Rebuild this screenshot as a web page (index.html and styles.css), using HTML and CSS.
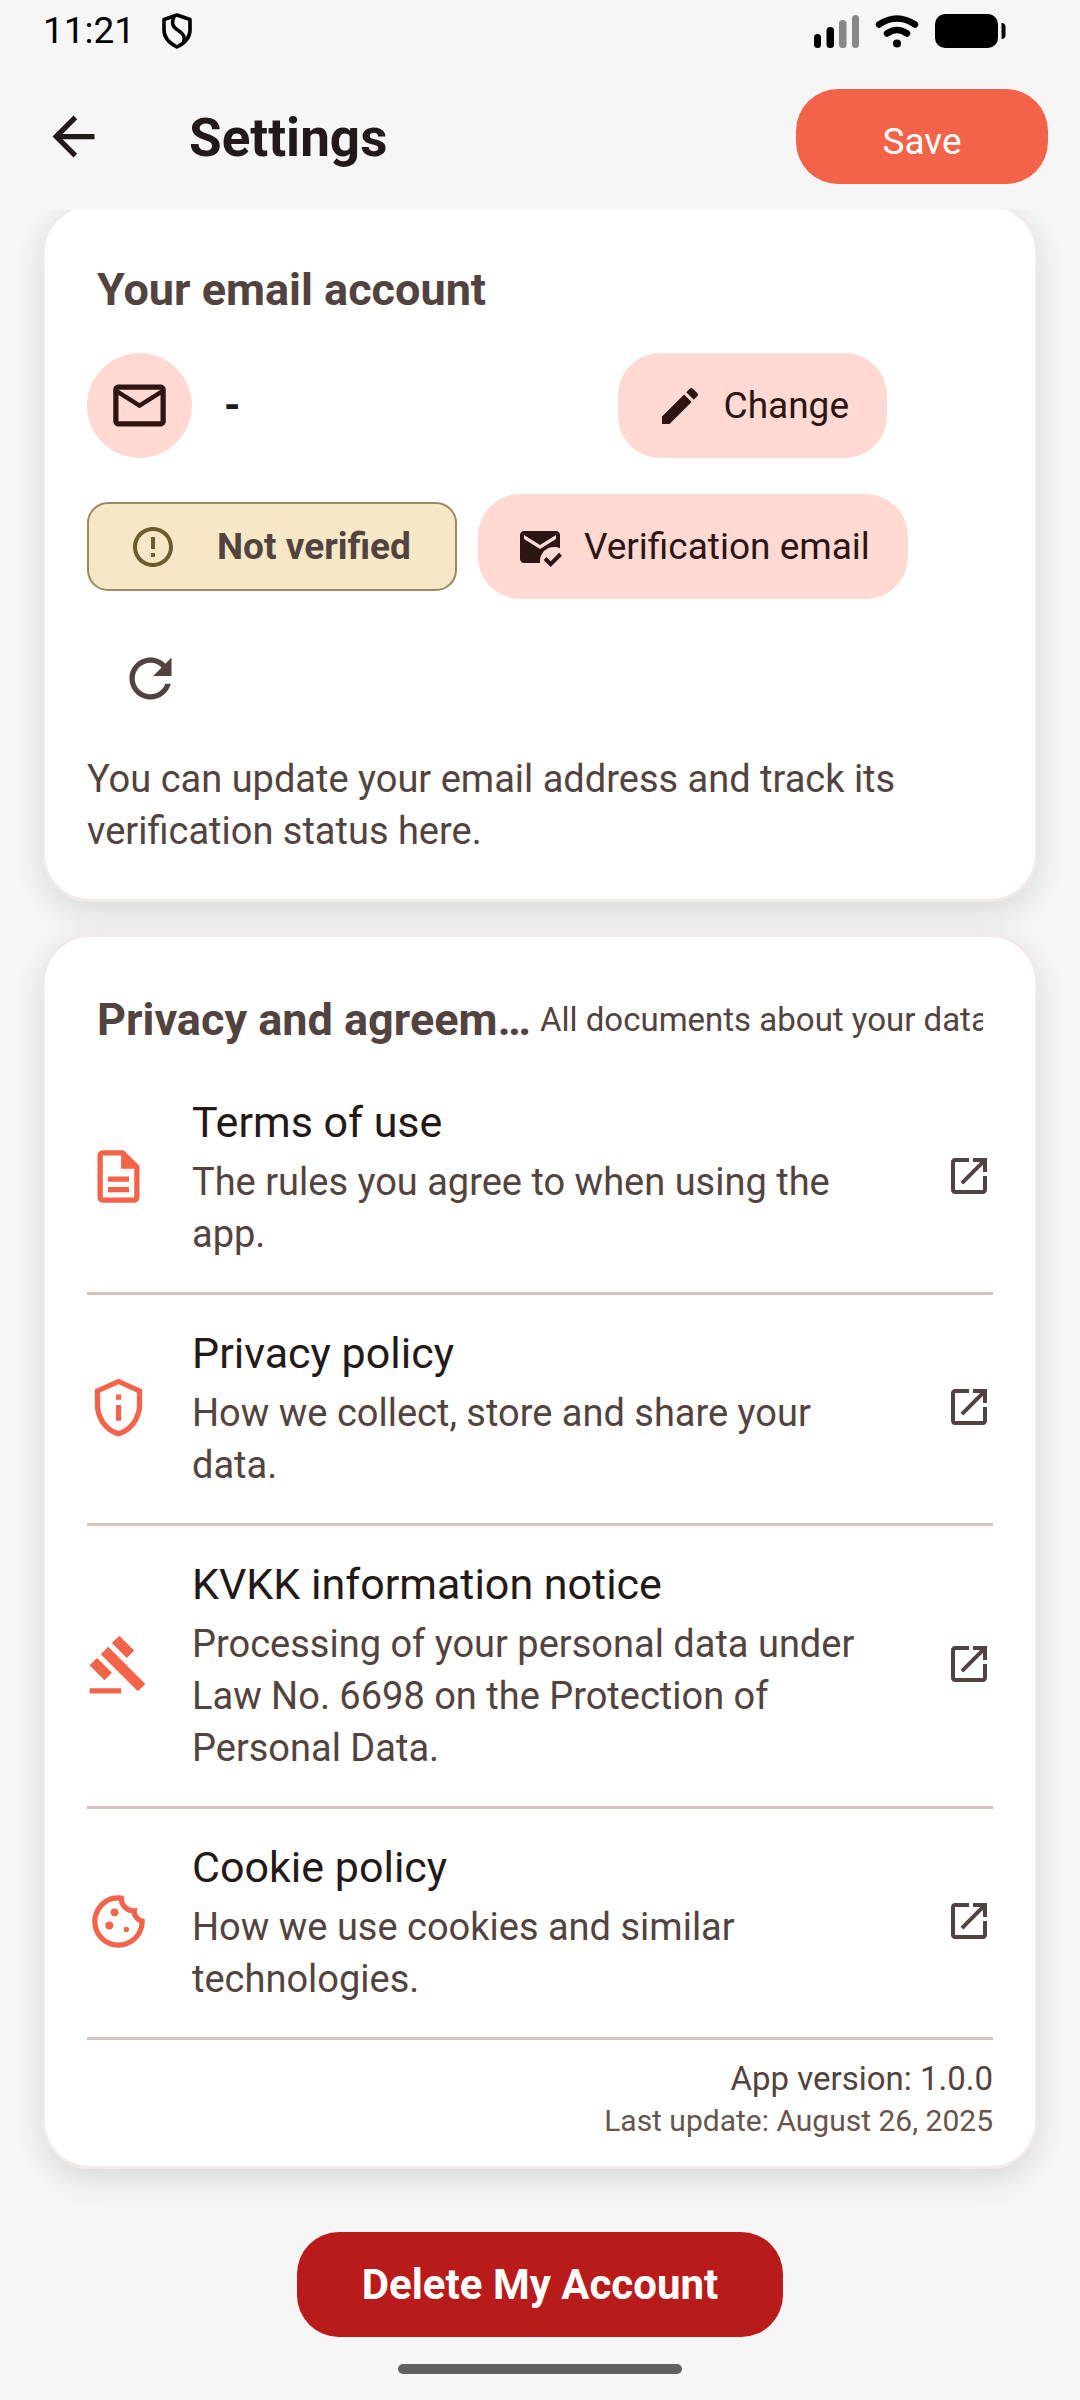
FILE: index.html
```html
<!DOCTYPE html>
<html lang="en">
<head>
  <meta charset="utf-8">
  <meta name="viewport" content="width=device-width, initial-scale=1">
  <title>Settings</title>
  <link rel="stylesheet" href="styles.css">
</head>
<body>
  <div class="top">
    <div class="status">
      <span class="clock">11:21</span>
      <svg class="shield" viewBox="0 0 30 36" fill="none" stroke="#000" stroke-width="3.600" stroke-linejoin="round"><path d="M15 2 28 6.500V17c0 8-6 13.500-13 17C8 30.500 2 25 2 17V6.500Z"/><path d="M12 3.500C8.500 12.500 12 14.500 17 18c5 3.500 6 6 4.500 11"/></svg>
      <div class="status-icons">
        <svg class="signal" viewBox="0 0 45 34"><rect x="0" y="20" width="7" height="14" rx="3.500"/><rect x="12.500" y="13" width="7.500" height="21" rx="3.500"/><rect x="25" y="6" width="7.500" height="28" rx="3.500" fill="#888"/><rect x="38" y="1" width="7" height="33" rx="3.500" fill="#888"/></svg>
        <svg class="wifi" viewBox="0 0 44 34" fill="none" stroke="#000" stroke-width="6.500" stroke-linecap="round"><path d="M4 10.500Q22-1.500 40 10.500"/><path d="M12 19.500Q22 12.500 32 19.500"/><circle cx="22" cy="29.500" r="4" fill="#000" stroke="none"/></svg>
        <svg class="battery" viewBox="0 0 71 34"><rect width="63" height="34" rx="10"/><path d="M66.500 9c3 0 4 2 4 4v8c0 2-1 4-4 4Z"/></svg>
      </div>
    </div>
    <header class="appbar">
      <button class="back" type="button" aria-label="Back">
        <svg class="icon-lg" viewBox="0 0 24 24"><path d="M20 11H7.830l5.590-5.590L12 4l-8 8 8 8 1.410-1.410L7.830 13H20v-2z"/></svg>
      </button>
      <h1 class="page-title">Settings</h1>
      <button class="save" type="button">Save</button>
    </header>
  </div>

  <main class="content">
    <section class="card email-card">
      <h2 class="card-title">Your email account</h2>
      <div class="email-row">
        <span class="avatar"><svg class="icon-lg" viewBox="0 0 24 24"><path d="M22 6c0-1.100-.9-2-2-2H4c-1.100 0-2 .9-2 2v12c0 1.100.9 2 2 2h16c1.100 0 2-.9 2-2V6zm-2 0-8 5-8-5h16zm0 12H4V8l8 5 8-5v10z"/></svg></span>
        <span class="email-value">-</span>
        <button class="tonal" type="button">
          <svg class="icon-md" viewBox="0 0 24 24"><path d="M3 17.250V21h3.750L17.810 9.940l-3.750-3.750L3 17.250zM20.710 7.040c.39-.39.39-1.020 0-1.410l-2.340-2.340c-.39-.39-1.020-.39-1.410 0l-1.830 1.830 3.750 3.750 1.830-1.830z"/></svg>
          Change
        </button>
      </div>
      <div class="verify-row">
        <span class="chip">
          <svg class="icon-md" viewBox="0 0 24 24"><path d="M11 15h2v2h-2v-2zm0-8h2v6h-2V7zm.99-5C6.470 2 2 6.480 2 12s4.470 10 9.990 10C17.520 22 22 17.520 22 12S17.520 2 11.990 2zM12 20c-4.420 0-8-3.580-8-8s3.580-8 8-8 8 3.580 8 8-3.580 8-8 8z"/></svg>
          Not verified
        </span>
        <button class="tonal" type="button">
          <svg class="icon-md" viewBox="0 0 24 24"><path d="M20 4H4c-1.100 0-2 .9-2 2v12c0 1.100.9 2 2 2h8.080c-.05-.33-.08-.66-.08-1 0-3.870 3.130-7 7-7 1.070 0 2.090.25 3 .68V6c0-1.100-.9-2-2-2zm0 4-8 5-8-5V6l8 5 8-5v2z"/><path d="m17.340 22-3.540-3.540 1.410-1.410 2.120 2.120 4.240-4.240 1.410 1.410L17.340 22z"/></svg>
          Verification email
        </button>
      </div>
      <button class="refresh" type="button" aria-label="Refresh">
        <svg class="icon-lg" viewBox="0 0 24 24"><path d="M17.650 6.350C16.200 4.900 14.210 4 12 4c-4.420 0-7.990 3.580-7.990 8s3.570 8 7.990 8c3.730 0 6.840-2.550 7.730-6h-2.080c-.82 2.330-3.040 4-5.650 4-3.310 0-6-2.690-6-6s2.690-6 6-6c1.660 0 3.140.69 4.220 1.780L13 11h7V4l-2.350 2.350z"/></svg>
      </button>
      <p class="hint">You can update your email address and track its verification status here.</p>
    </section>

    <section class="card docs-card">
      <div class="docs-head">
        <h2 class="card-title">Privacy and agreements</h2>
        <span class="docs-note">All documents about your data</span>
      </div>
      <nav class="docs">
        <a class="doc" href="#terms">
          <svg class="icon-lg lead" viewBox="0 0 24 24"><path d="M8 16h8v2H8zm0-4h8v2H8zm6-10H6c-1.100 0-2 .9-2 2v16c0 1.100.89 2 1.990 2H18c1.100 0 2-.9 2-2V8l-6-6zm4 18H6V4h7v5h5v11z"/></svg>
          <span class="doc-text"><span class="doc-title">Terms of use</span><span class="doc-desc">The rules you agree to when using the app.</span></span>
          <svg class="icon-md open" viewBox="0 0 24 24"><path d="M19 19H5V5h7V3H5c-1.110 0-2 .9-2 2v14c0 1.100.89 2 2 2h14c1.100 0 2-.9 2-2v-7h-2v7zM14 3v2h3.590l-9.830 9.830 1.410 1.410L19 6.410V10h2V3h-7z"/></svg>
        </a>
        <a class="doc" href="#privacy">
          <svg class="icon-lg lead" viewBox="0 0 24 24"><path d="M12 1 3 5v6c0 5.550 3.840 10.740 9 12 5.160-1.260 9-6.450 9-12V5l-9-4zm7 10c0 4.520-2.980 8.690-7 9.930-4.020-1.240-7-5.410-7-9.930V6.300l7-3.110 7 3.110V11zm-8-4h2v2h-2zm0 4h2v6h-2z"/></svg>
          <span class="doc-text"><span class="doc-title">Privacy policy</span><span class="doc-desc">How we collect, store and share your data.</span></span>
          <svg class="icon-md open" viewBox="0 0 24 24"><path d="M19 19H5V5h7V3H5c-1.110 0-2 .9-2 2v14c0 1.100.89 2 2 2h14c1.100 0 2-.9 2-2v-7h-2v7zM14 3v2h3.590l-9.830 9.830 1.410 1.410L19 6.410V10h2V3h-7z"/></svg>
        </a>
        <a class="doc" href="#kvkk">
          <svg class="icon-lg lead" viewBox="0 0 24 24"><path d="M1 21h12v2H1zM5.245 8.070l2.830-2.827 14.140 14.142-2.828 2.828zM12.317 1l5.657 5.656-2.830 2.830-5.654-5.660zM3.825 9.485l5.657 5.657-2.828 2.828-5.657-5.657z"/></svg>
          <span class="doc-text"><span class="doc-title">KVKK information notice</span><span class="doc-desc">Processing of your personal data under Law No. 6698 on the Protection of Personal Data.</span></span>
          <svg class="icon-md open" viewBox="0 0 24 24"><path d="M19 19H5V5h7V3H5c-1.110 0-2 .9-2 2v14c0 1.100.89 2 2 2h14c1.100 0 2-.9 2-2v-7h-2v7zM14 3v2h3.590l-9.830 9.830 1.410 1.410L19 6.410V10h2V3h-7z"/></svg>
        </a>
        <a class="doc" href="#cookies">
          <svg class="icon-lg lead" viewBox="0 0 24 24"><circle cx="10.500" cy="8.500" r="1.500"/><circle cx="8.500" cy="13.500" r="1.500"/><circle cx="15" cy="15" r="1"/><path d="M21.950 10.990c-1.790-.03-3.700-1.950-2.680-4.220-2.980 1-5.770-1.590-5.190-4.560C6.950.71 2 6.580 2 12c0 5.520 4.480 10 10 10 5.890 0 10.540-5.080 9.950-11.010zM12 20c-4.410 0-8-3.590-8-8 0-3.310 2.730-8.180 8.080-8.020.42 2.540 2.440 4.560 4.990 4.940.07.360.52 2.550 2.920 3.630C19.700 16.860 16.060 20 12 20z"/></svg>
          <span class="doc-text"><span class="doc-title">Cookie policy</span><span class="doc-desc">How we use cookies and similar technologies.</span></span>
          <svg class="icon-md open" viewBox="0 0 24 24"><path d="M19 19H5V5h7V3H5c-1.110 0-2 .9-2 2v14c0 1.100.89 2 2 2h14c1.100 0 2-.9 2-2v-7h-2v7zM14 3v2h3.590l-9.830 9.830 1.410 1.410L19 6.410V10h2V3h-7z"/></svg>
        </a>
      </nav>
      <div class="version">
        <p class="version-app">App version: 1.0.0</p>
        <p class="version-date">Last update: August 26, 2025</p>
      </div>
    </section>

    <button class="delete" type="button">Delete My Account</button>
  </main>
  <div class="home-bar"></div>
</body>
</html>
```
FILE: styles.css
```css
* { box-sizing: border-box; }

body {
  margin: 0;
  background: #f6f6f6;
  color: #231918;
  font-family: Roboto, "Liberation Sans", sans-serif;
  font-size: 37px;
  line-height: 52px;
}

h1, h2, p { margin: 0; }

button {
  border: 0;
  padding: 0;
  background: none;
  color: inherit;
  font: inherit;
  cursor: pointer;
}

svg { display: block; flex: none; fill: currentColor; }
.icon-lg { width: 63px; height: 63px; }
.icon-md { width: 48px; height: 48px; }

.top {
  position: sticky;
  top: 0;
  z-index: 1;
  background: #f6f6f6;
}

.status {
  display: flex;
  align-items: center;
  height: 62px;
  padding: 0 74px 0 43px;
  color: #000;
}
.clock { font-size: 37px; line-height: 60px; }
.shield { width: 30px; height: 36px; margin-left: 27px; fill: none; }
.status-icons { display: flex; gap: 16px; margin-left: auto; }
.signal { width: 45px; height: 34px; }
.wifi { width: 44px; height: 34px; fill: none; }
.battery { width: 71px; height: 34px; }

.appbar {
  display: flex;
  align-items: center;
  height: 148px;
  padding: 0 32px 0 42px;
}
.page-title {
  flex: 1;
  margin-left: 84px;
  padding-top: 3px;
  font-size: 53px;
  line-height: 64px;
  font-weight: 700;
}
.save {
  width: 252px;
  height: 95px;
  padding-top: 12px;
  border-radius: 42px;
  background: #f36349;
  color: #fff;
}

.content {
  display: flex;
  flex-direction: column;
  align-items: center;
  gap: 32px;
  margin-top: -6px;
  padding: 0 42px;
}

.card {
  width: 100%;
  border: 3px solid #f2e9e8;
  border-radius: 48px;
  background: #fff;
  box-shadow: 0 10px 32px rgba(0, 0, 0, 0.12);
}
.card-title {
  color: #534340;
  font-size: 45px;
  line-height: 62px;
  font-weight: 700;
}

.email-card { padding: 52px 42px 42px; }
.email-card .card-title { padding: 0 10px; }
.email-row {
  display: flex;
  align-items: center;
  margin-top: 32px;
  padding-right: 106px;
}
.avatar {
  display: grid;
  place-items: center;
  width: 105px;
  height: 105px;
  border-radius: 50%;
  background: #ffd9d2;
  color: #2c1512;
}
.email-value { flex: 1; margin-left: 32px; font-size: 42px; font-weight: 700; }

.tonal {
  display: flex;
  align-items: center;
  gap: 20px;
  height: 105px;
  padding: 0 38px;
  border-radius: 42px;
  background: #ffd9d2;
  color: #2c1512;
}
.verify-row {
  display: flex;
  align-items: center;
  gap: 21px;
  margin-top: 36px;
}
.chip {
  display: flex;
  align-items: center;
  gap: 40px;
  height: 89px;
  padding: 0 44px 0 40px;
  border: 2px solid #9c8a5c;
  border-radius: 21px;
  background: #f6e8c6;
  color: #534340;
  font-weight: 700;
}
.chip svg { color: #6c5d2f; }
.refresh {
  display: grid;
  place-items: center;
  width: 126px;
  height: 126px;
  margin-top: 16px;
  color: #534340;
}
.hint { margin-top: 12px; color: #534340; font-size: 38px; }

.docs-card { padding: 52px 42px 24px; }
.docs-head {
  display: grid;
  grid-template-columns: 1fr 1fr;
  align-items: center;
  padding: 0 10px;
}
.docs-head .card-title,
.docs-note { overflow: hidden; white-space: nowrap; }
.docs-head .card-title { text-overflow: ellipsis; }
.docs-note { color: #534340; font-size: 33px; line-height: 42px; }

.docs { margin-top: 13px; }
.doc {
  display: flex;
  align-items: center;
  gap: 42px;
  padding: 28px 0 32px;
  border-bottom: 3px solid #d8c2bd;
  color: inherit;
  text-decoration: none;
}
.lead { color: #f36349; }
.open { color: #534340; }
.doc-text {
  flex: 1;
  display: flex;
  flex-direction: column;
  gap: 4px;
  padding-right: 20px;
}
.doc-title { font-size: 43px; line-height: 60px; }
.doc-desc { color: #534340; font-size: 38px; }

.version { margin-top: 18px; color: #534340; text-align: right; line-height: 42px; }
.version-app { font-size: 33px; }
.version-date { color: #66554f; font-size: 30px; }

.delete {
  height: 105px;
  margin-top: 31px;
  padding: 0 65px;
  border-radius: 42px;
  background: #b91a1a;
  color: #fff;
  font-size: 42px;
  font-weight: 700;
}

.home-bar {
  width: 284px;
  height: 10px;
  margin: 27px auto 26px;
  border-radius: 5px;
  background: #616161;
}
```
